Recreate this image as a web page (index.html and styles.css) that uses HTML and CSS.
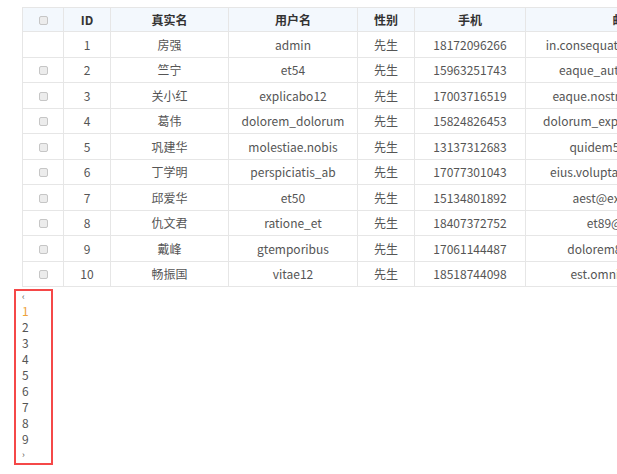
FILE: index.html
```html
<!DOCTYPE html>
<html>
<head>
<meta charset="utf-8">
<link rel="stylesheet" href="styles.css">
</head>
<body>
<div class="wrap">
  <table class="grid">
    <colgroup>
      <col class="c-cb"><col class="c-id"><col class="c-name"><col class="c-user"><col class="c-sex"><col class="c-phone"><col class="c-mail">
    </colgroup>
    <thead>
      <tr><th><span class="cb"></span></th><th>ID</th><th>真实名</th><th>用户名</th><th>性别</th><th>手机</th><th>邮箱</th></tr>
    </thead>
    <tbody>
      <tr><td></td><td>1</td><td>房强</td><td>admin</td><td>先生</td><td>18172096266</td><td>in.consequatur@yahoo.com</td></tr>
      <tr><td><span class="cb"></span></td><td>2</td><td>竺宁</td><td>et54</td><td>先生</td><td>15963251743</td><td>eaque_autem@qq.com</td></tr>
      <tr><td><span class="cb"></span></td><td>3</td><td>关小红</td><td>explicabo12</td><td>先生</td><td>17003716519</td><td>eaque.nostrum@126.com</td></tr>
      <tr><td><span class="cb"></span></td><td>4</td><td>葛伟</td><td>dolorem_dolorum</td><td>先生</td><td>15824826453</td><td>dolorum_explicabo@qq.com</td></tr>
      <tr><td><span class="cb"></span></td><td>5</td><td>巩建华</td><td>molestiae.nobis</td><td>先生</td><td>13137312683</td><td>quidem52@qq.com</td></tr>
      <tr><td><span class="cb"></span></td><td>6</td><td>丁学明</td><td>perspiciatis_ab</td><td>先生</td><td>17077301043</td><td>eius.voluptatem@163.com</td></tr>
      <tr><td><span class="cb"></span></td><td>7</td><td>邱爱华</td><td>et50</td><td>先生</td><td>15134801892</td><td>aest@example.net</td></tr>
      <tr><td><span class="cb"></span></td><td>8</td><td>仇文君</td><td>ratione_et</td><td>先生</td><td>18407372752</td><td>et89@ex.com</td></tr>
      <tr><td><span class="cb"></span></td><td>9</td><td>戴峰</td><td>gtemporibus</td><td>先生</td><td>17061144487</td><td>dolorem86@qq.com</td></tr>
      <tr><td><span class="cb"></span></td><td>10</td><td>畅振国</td><td>vitae12</td><td>先生</td><td>18518744098</td><td>est.omnis@qq.com</td></tr>
    </tbody>
  </table>
</div>
<ul class="pager">
  <li class="arrow first">‹</li>
  <li class="active">1</li>
  <li>2</li>
  <li>3</li>
  <li>4</li>
  <li>5</li>
  <li>6</li>
  <li>7</li>
  <li>8</li>
  <li>9</li>
  <li class="arrow last">›</li>
</ul>
</body>
</html>
```
FILE: styles.css
```css
html, body {
  margin: 0;
  padding: 0;
  background: #fff;
  overflow: hidden;
}
body {
  font-family: "Noto Sans CJK SC", sans-serif;
  font-size: 12px;
  color: #555;
}
.wrap {
  padding: 7px 0 0 22px;
  overflow: hidden;
}
.grid {
  table-layout: fixed;
  border-collapse: collapse;
  width: 701px;
}
.c-cb { width: 41px; }
.c-id { width: 47px; }
.c-name { width: 118px; }
.c-user { width: 129px; }
.c-sex { width: 57px; }
.c-phone { width: 111px; }
.c-mail { width: 198px; }
.grid th, .grid td {
  border: 1px solid #e6e6e6;
  text-align: center;
  padding: 0;
  white-space: nowrap;
  overflow: hidden;
}
.grid th {
  background: #f3f8fd;
  color: #333;
  font-weight: bold;
  height: 23px;
}
.grid td {
  height: 24.5px;
}
.cb {
  display: inline-block;
  width: 7px;
  height: 7px;
  border: 1px solid #c6c6c6;
  background: #ececec;
  border-radius: 2px;
  vertical-align: middle;
  margin-top: -2px;
}
.pager {
  list-style: none;
  margin: 2px 0 0 14px;
  padding: 0 0 0 6px;
  width: 29px;
  border: 2px solid #f54848;
}
.pager li {
  line-height: 16px;
  height: 16px;
  color: #555;
}
.pager li.active {
  color: #eea23a;
}
.pager li.arrow {
  font-size: 9px;
}
.pager li.first {
  height: 12px;
  line-height: 12px;
}
```
